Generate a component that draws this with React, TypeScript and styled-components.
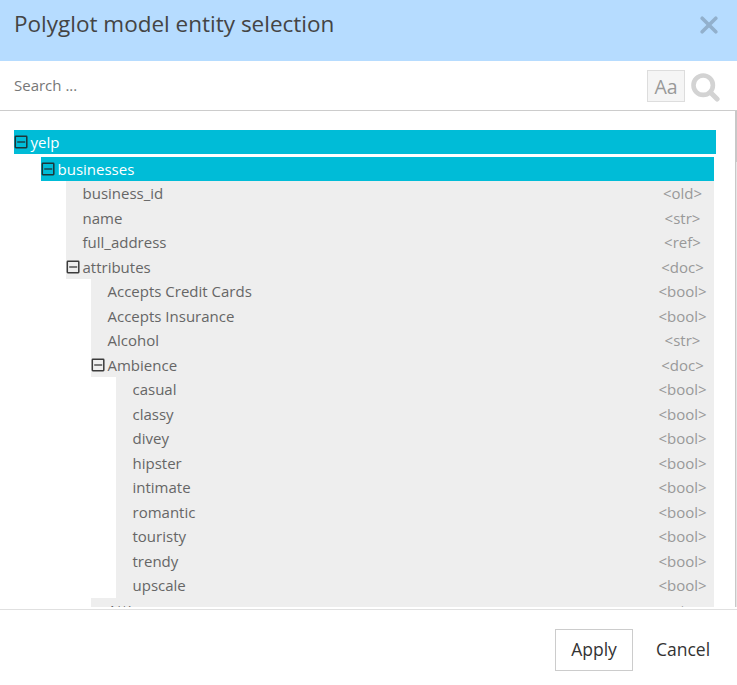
import React from "react";
import styled, { createGlobalStyle } from "styled-components";

const GlobalStyle = createGlobalStyle`
  *, *::before, *::after { box-sizing: border-box; }
  body { margin: 0; background: #fff; }
`;

const Dialog = styled.div`
  display: flex;
  flex-direction: column;
  width: 737px;
  height: 685px;
  overflow: hidden;
  background: #fff;
  color: #666;
  font: 400 15px "Open Sans", sans-serif;
`;

const Header = styled.header`
  display: flex;
  justify-content: space-between;
  flex: none;
  height: 61px;
  padding: 0 19px 0 14px;
  background: #b6dcff;
`;

const Title = styled.h1`
  margin: 8px 0 0;
  color: #444;
  font-size: 22.5px;
  font-weight: 400;
  line-height: 32px;
  white-space: nowrap;
`;

const CloseButton = styled.button`
  display: block;
  width: 18px;
  height: 18px;
  margin: 16px 0 0;
  padding: 0;
  border: 0;
  background: none;
  svg { display: block; }
`;

const SearchBar = styled.div`
  display: flex;
  flex: none;
  height: 50px;
  padding: 0 17px 0 14px;
  border-bottom: 1px solid #ccc;
`;

const SearchInput = styled.input`
  flex: 1;
  min-width: 0;
  height: 48px;
  padding: 0;
  border: 0;
  outline: 0;
  background: none;
  font: inherit;
  &::placeholder { color: #777; opacity: 1; }
`;

const CaseButton = styled.button`
  width: 38px;
  height: 32px;
  margin: 9px 6px 0 0;
  padding: 1px 0 0;
  border: 1px solid #ddd;
  background: #f5f5f5;
  color: #999;
  font: 400 19.5px/29px "Open Sans", sans-serif;
`;

const SearchIcon = styled.svg`
  flex: none;
  display: block;
  margin-top: 12px;
`;

const Body = styled.div`
  display: flex;
  flex: none;
  height: 496px;
  overflow: hidden;
`;

const Tree = styled.div`
  flex: 1;
  padding: 19px 19px 0 14px;
`;

const Scrollbar = styled.div`
  width: 2px;
  background: #e6e6e6;
  border-left: 1px solid #c8c8c8;
`;

const ScrollThumb = styled.div`
  height: 51px;
  background: #c8c8c8;
`;

const Row = styled.div<{ $level: number }>`
  display: flex;
  align-items: center;
  height: 24.5px;
  margin-left: ${(p) => 27 + p.$level * 25}px;
  margin-right: 2px;
  background: #eee;
  line-height: 24px;
`;

const EntityRow = styled(Row)<{ $root?: boolean }>`
  height: 24px;
  margin: ${(p) => (p.$root ? "0 0 3px" : "0 2px 0 27px")};
  background: #00bcd7;
  color: #fff;
  font-weight: 500;
`;

const Toggle = styled.span`
  display: block;
  flex: none;
  width: 16.5px;
  height: 14px;
  svg { display: block; }
`;

const Name = styled.span`
  flex: 1;
  white-space: nowrap;
`;

const TypeTag = styled.span`
  width: 63px;
  color: #999;
  text-align: center;
`;

const Footer = styled.footer`
  display: flex;
  justify-content: flex-end;
  flex: none;
  height: 76px;
  margin-top: 2px;
  padding: 19px 8px 0;
  border-top: 1px solid #e0e0e0;
`;

const FooterButton = styled.button<{ $outlined?: boolean }>`
  width: ${(p) => (p.$outlined ? 78 : 92)}px;
  height: 42px;
  margin-left: 4px;
  padding: 0 0 2px;
  border: 1px solid ${(p) => (p.$outlined ? "#ccc" : "transparent")};
  background: #fff;
  color: #333;
  font: 400 17.5px "Open Sans", sans-serif;
`;

const Collapse = () => (
  <Toggle>
    <svg width="14" height="14" viewBox="0 0 14 14" fill="none">
      <rect x="1.3" y="1.3" width="11.5" height="11.4" rx="0.6" stroke="#222" strokeOpacity=".88" strokeWidth="1.5" />
      <path d="M3.2 7h8" stroke="#222" strokeOpacity=".6" strokeWidth="1.9" />
    </svg>
  </Toggle>
);

type Field = { level: number; name: string; type: string };

const fields: Field[] = [
  { level: 1, name: "business_id", type: "old" },
  { level: 1, name: "name", type: "str" },
  { level: 1, name: "full_address", type: "ref" },
  { level: 1, name: "attributes", type: "doc" },
  { level: 2, name: "Accepts Credit Cards", type: "bool" },
  { level: 2, name: "Accepts Insurance", type: "bool" },
  { level: 2, name: "Alcohol", type: "str" },
  { level: 2, name: "Ambience", type: "doc" },
  { level: 3, name: "casual", type: "bool" },
  { level: 3, name: "classy", type: "bool" },
  { level: 3, name: "divey", type: "bool" },
  { level: 3, name: "hipster", type: "bool" },
  { level: 3, name: "intimate", type: "bool" },
  { level: 3, name: "romantic", type: "bool" },
  { level: 3, name: "touristy", type: "bool" },
  { level: 3, name: "trendy", type: "bool" },
  { level: 3, name: "upscale", type: "bool" },
  { level: 2, name: "Attire", type: "str" },
];

export default function App() {
  return (
    <>
      <GlobalStyle />
      <Dialog role="dialog">
        <Header>
          <Title>Polyglot model entity selection</Title>
          <CloseButton aria-label="Close">
            <svg width="18" height="18" viewBox="0 0 18 18">
              <path d="M2.2 2.2l13.6 13.6M15.8 2.2L2.2 15.8" stroke="#92b0cc" strokeWidth="3.6" strokeLinecap="round" />
            </svg>
          </CloseButton>
        </Header>
        <SearchBar>
          <SearchInput placeholder="Search ..." />
          <CaseButton>Aa</CaseButton>
          <SearchIcon width="29" height="29" viewBox="0 0 29 29" fill="none" stroke="#d3d3d3">
            <circle cx="12.2" cy="12.2" r="9.7" strokeWidth="4.6" />
            <path d="M19.5 19.5l6.6 6.6" strokeWidth="5" strokeLinecap="round" />
          </SearchIcon>
        </SearchBar>
        <Body>
          <Tree>
            <EntityRow $level={0} $root>
              <Collapse />
              <Name>yelp</Name>
            </EntityRow>
            <EntityRow $level={0}>
              <Collapse />
              <Name>businesses</Name>
            </EntityRow>
            {fields.map((f) => (
              <Row key={f.name} $level={f.level}>
                {f.type === "doc" ? <Collapse /> : <Toggle />}
                <Name>{f.name}</Name>
                <TypeTag>{`<${f.type}>`}</TypeTag>
              </Row>
            ))}
          </Tree>
          <Scrollbar>
            <ScrollThumb />
          </Scrollbar>
        </Body>
        <Footer>
          <FooterButton $outlined>Apply</FooterButton>
          <FooterButton>Cancel</FooterButton>
        </Footer>
      </Dialog>
    </>
  );
}
